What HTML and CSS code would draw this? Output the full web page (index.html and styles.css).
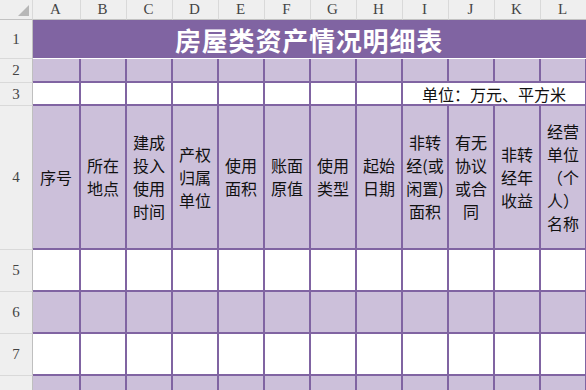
FILE: index.html
```html
<!DOCTYPE html>
<html lang="zh">
<head>
<meta charset="utf-8">
<link rel="stylesheet" href="styles.css">
</head>
<body>
<div class="sheet">
  <div class="corner"><span class="tri"></span></div>
  <div class="ch">A</div><div class="ch">B</div><div class="ch">C</div><div class="ch">D</div>
  <div class="ch">E</div><div class="ch">F</div><div class="ch">G</div><div class="ch">H</div>
  <div class="ch">I</div><div class="ch">J</div><div class="ch">K</div><div class="ch">L</div>

  <div class="rh">1</div>
  <div class="title">房屋类资产情况明细表</div>

  <div class="rh">2</div>
  <div class="c alt"></div><div class="c alt"></div><div class="c alt"></div><div class="c alt"></div>
  <div class="c alt"></div><div class="c alt"></div><div class="c alt"></div><div class="c alt"></div>
  <div class="c alt"></div><div class="c alt"></div><div class="c alt"></div><div class="c alt"></div>

  <div class="rh">3</div>
  <div class="c"></div><div class="c"></div><div class="c"></div><div class="c"></div>
  <div class="c"></div><div class="c"></div><div class="c"></div><div class="c"></div>
  <div class="c unit">单位：万元、平方米</div>

  <div class="rh">4</div>
  <div class="c alt hd">序号</div>
  <div class="c alt hd">所在<br>地点</div>
  <div class="c alt hd">建成<br>投入<br>使用<br>时间</div>
  <div class="c alt hd">产权<br>归属<br>单位</div>
  <div class="c alt hd">使用<br>面积</div>
  <div class="c alt hd">账面<br>原值</div>
  <div class="c alt hd">使用<br>类型</div>
  <div class="c alt hd">起始<br>日期</div>
  <div class="c alt hd">非转<br>经(或<br>闲置)<br>面积</div>
  <div class="c alt hd">有无<br>协议<br>或合<br>同</div>
  <div class="c alt hd">非转<br>经年<br>收益</div>
  <div class="c alt hd">经营<br>单位<br>（个<br>人）<br>名称</div>

  <div class="rh">5</div>
  <div class="c"></div><div class="c"></div><div class="c"></div><div class="c"></div>
  <div class="c"></div><div class="c"></div><div class="c"></div><div class="c"></div>
  <div class="c"></div><div class="c"></div><div class="c"></div><div class="c"></div>

  <div class="rh">6</div>
  <div class="c alt"></div><div class="c alt"></div><div class="c alt"></div><div class="c alt"></div>
  <div class="c alt"></div><div class="c alt"></div><div class="c alt"></div><div class="c alt"></div>
  <div class="c alt"></div><div class="c alt"></div><div class="c alt"></div><div class="c alt"></div>

  <div class="rh">7</div>
  <div class="c"></div><div class="c"></div><div class="c"></div><div class="c"></div>
  <div class="c"></div><div class="c"></div><div class="c"></div><div class="c"></div>
  <div class="c"></div><div class="c"></div><div class="c"></div><div class="c"></div>

  <div class="rh"></div>
  <div class="c alt"></div><div class="c alt"></div><div class="c alt"></div><div class="c alt"></div>
  <div class="c alt"></div><div class="c alt"></div><div class="c alt"></div><div class="c alt"></div>
  <div class="c alt"></div><div class="c alt"></div><div class="c alt"></div><div class="c alt"></div>
</div>
</body>
</html>
```

FILE: styles.css
```css
html, body {
  margin: 0;
  padding: 0;
  background: #ffffff;
  overflow: hidden;
}

.sheet {
  display: grid;
  grid-template-columns: 33px 48px repeat(11, 46px);
  grid-template-rows: 20px 39px 24px 23px 144px 42px 42px 42px 42px;
  width: 587px;
  height: 390px;
  overflow: hidden;
  font-family: "Noto Sans CJK SC", "Noto Sans", sans-serif;
}

.corner {
  position: relative;
  background: #efefef;
  border-right: 1px solid #d9d9d9;
  border-bottom: 1px solid #c2c2c2;
  box-sizing: border-box;
}

.tri {
  position: absolute;
  right: 3px;
  bottom: 3px;
  width: 0;
  height: 0;
  border-left: 11px solid transparent;
  border-bottom: 11px solid #b7b7b7;
}

.ch {
  background: #efefef;
  border-right: 1px solid #d9d9d9;
  border-bottom: 1px solid #c2c2c2;
  box-sizing: border-box;
  color: #444444;
  font-family: "Liberation Serif", "DejaVu Serif", serif;
  font-size: 15px;
  display: flex;
  align-items: center;
  justify-content: center;
  padding-right: 2px;
}

.rh {
  background: #efefef;
  border-right: 1px solid #bfbfbf;
  border-bottom: 1px solid #d9d9d9;
  box-sizing: border-box;
  color: #444444;
  font-family: "Liberation Serif", "DejaVu Serif", serif;
  font-size: 15px;
  display: flex;
  align-items: center;
  justify-content: center;
}

.title {
  grid-column: span 12;
  background: #8064a2;
  border-bottom: 1px solid #ffffff;
  box-sizing: border-box;
  color: #ffffff;
  font-weight: bold;
  font-size: 26px;
  letter-spacing: 0.8px;
  display: flex;
  align-items: center;
  justify-content: center;
  padding-right: 2px;
}

.c {
  background: #ffffff;
  border-right: 2px solid #8064a2;
  border-bottom: 2px solid #8064a2;
  box-sizing: border-box;
}

.alt {
  background: #ccc0da;
}

.hd {
  display: flex;
  align-items: center;
  justify-content: center;
  text-align: center;
  font-size: 16px;
  line-height: 23px;
  color: #111111;
}

.unit {
  grid-column: span 4;
  display: flex;
  align-items: center;
  justify-content: flex-end;
  padding-right: 19px;
  font-size: 16px;
  color: #111111;
}
```
